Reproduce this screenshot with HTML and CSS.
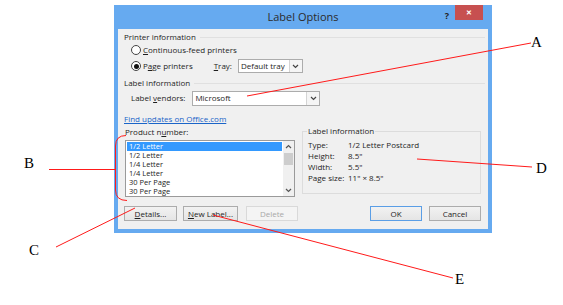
FILE: index.html
```html
<!DOCTYPE html>
<html lang="en">
<head>
  <meta charset="UTF-8">
  <title>Label Options</title>
  <link rel="stylesheet" href="styles.css">
</head>
<body>
  <div class="stage">
    <div class="dialog">
      <div class="titlebar">
        <span></span>
        <span class="title">Label Options</span>
        <div class="controls">
          <span class="help">?</span>
          <span class="close">&#x2715;</span>
        </div>
      </div>

      <div class="content">
        <div class="section-head"><span>Printer information</span></div>
        <div class="row radio-row">
          <span class="radio"></span>
          <span><u>C</u>ontinuous-feed printers</span>
        </div>
        <div class="row radio-row">
          <span class="radio checked"></span>
          <span>P<u>a</u>ge printers</span>
          <span class="tray-label"><u>T</u>ray:</span>
          <div class="select tray">
            <span class="select-text">Default tray</span>
            <span class="select-btn"><svg width="7" height="5" viewBox="0 0 7 5"><path d="M1 1l2.5 2.5L6 1" fill="none" stroke="#444" stroke-width="1.2"/></svg></span>
          </div>
        </div>

        <div class="section-head second"><span>Label information</span></div>
        <div class="row vendor-row">
          <span>Label <u>v</u>endors:</span>
          <div class="select vendor">
            <span class="select-text">Microsoft</span>
            <span class="select-btn"><svg width="7" height="5" viewBox="0 0 7 5"><path d="M1 1l2.5 2.5L6 1" fill="none" stroke="#444" stroke-width="1.2"/></svg></span>
          </div>
        </div>

        <a class="link" href="#">Find updates on Office.com</a>

        <div class="lower">
          <div class="product">
            <div class="product-label">Product n<u>u</u>mber:</div>
            <div class="listbox">
              <ul class="items">
                <li class="selected">1/2 Letter</li>
                <li>1/2 Letter</li>
                <li>1/4 Letter</li>
                <li>1/4 Letter</li>
                <li>30 Per Page</li>
                <li>30 Per Page</li>
              </ul>
              <div class="scrollbar">
                <span class="arrow"><svg width="7" height="5" viewBox="0 0 7 5"><path d="M1 4l2.5-2.5L6 4" fill="none" stroke="#555" stroke-width="1.2"/></svg></span>
                <span class="track"><span class="thumb"></span></span>
                <span class="arrow"><svg width="7" height="5" viewBox="0 0 7 5"><path d="M1 1l2.5 2.5L6 1" fill="none" stroke="#555" stroke-width="1.2"/></svg></span>
              </div>
            </div>
          </div>

          <div class="info-box">
            <span class="legend">Label information</span>
            <dl class="info">
              <dt>Type:</dt><dd>1/2 Letter Postcard</dd>
              <dt>Height:</dt><dd>8.5"</dd>
              <dt>Width:</dt><dd>5.5"</dd>
              <dt>Page size:</dt><dd>11" &times; 8.5"</dd>
            </dl>
          </div>
        </div>

        <div class="buttons">
          <button class="btn details"><u>D</u>etails...</button>
          <button class="btn newlabel"><u>N</u>ew Label...</button>
          <button class="btn delete" disabled>Delete</button>
          <span class="spacer"></span>
          <button class="btn ok">OK</button>
          <button class="btn cancel">Cancel</button>
        </div>
      </div>
    </div>

    <!-- callout lines and letters -->
    <svg class="callouts" width="563" height="305" viewBox="0 0 563 305">
      <g stroke="#ff1a1a" stroke-width="1" fill="none">
        <line x1="531" y1="43" x2="247" y2="96"/>
        <line x1="49" y1="169.5" x2="115" y2="169.5"/>
        <path d="M126 135.5 Q115.5 135.5 115.5 146 L115.5 190 Q115.5 200.5 127 200.5"/>
        <line x1="56" y1="247" x2="135" y2="208"/>
        <line x1="417" y1="159" x2="532" y2="167"/>
        <line x1="213" y1="215" x2="453" y2="278"/>
      </g>
      <g class="tags">
        <text x="531" y="47">A</text>
        <text x="24" y="168">B</text>
        <text x="29" y="255">C</text>
        <text x="536" y="173">D</text>
        <text x="455" y="284">E</text>
      </g>
    </svg>
  </div>
</body>
</html>
```

FILE: styles.css
```css
body {
  margin: 0;
  background: #ffffff;
  font-family: 'Open Sans', 'Noto Sans', sans-serif;
  color: #1e1e1e;
}

.stage {
  position: relative;
  width: 563px;
  height: 305px;
  overflow: hidden;
}

.dialog {
  margin: 5px 0 0 114px;
  width: 378px;
  background: #66aaf0;
  padding: 0 4px 4px;
  box-sizing: border-box;
}

/* Title bar */
.titlebar {
  display: grid;
  grid-template-columns: 1fr auto 1fr;
  align-items: start;
  height: 24px;
}

.title {
  font-size: 11px;
  line-height: 11px;
  padding-top: 6px;
  color: #2b2b2b;
}

.controls {
  display: flex;
  justify-content: flex-end;
  align-items: flex-start;
  gap: 6px;
  margin-right: 5px;
}

.help {
  font-size: 9px;
  font-weight: 700;
  line-height: 9px;
  padding-top: 6px;
  color: #222;
}

.close {
  width: 28px;
  height: 15px;
  background: #c75050;
  color: #ffffff;
  font-size: 7px;
  font-weight: 700;
  display: flex;
  align-items: center;
  justify-content: center;
}

/* Dialog body */
.content {
  background: #f0f0f0;
  padding: 3px 7px 8px 6px;
  font-size: 8px;
  line-height: 10px;
}

.section-head {
  display: flex;
  align-items: center;
  gap: 4px;
  height: 10px;
  margin-right: -4px;
}

.section-head::after {
  content: '';
  flex: 1;
  border-top: 1px solid #e0e0e0;
}

.section-head.second {
  margin-top: 4px;
}

.row {
  display: flex;
  align-items: center;
}

.radio-row {
  height: 16px;
  padding-left: 7px;
}

.radio {
  width: 8px;
  height: 8px;
  border: 1px solid #444;
  border-radius: 50%;
  background: #ffffff;
  margin-right: 2px;
  display: flex;
  align-items: center;
  justify-content: center;
}

.radio.checked::after {
  content: '';
  width: 5px;
  height: 5px;
  border-radius: 50%;
  background: #111;
}

.tray-label {
  margin-left: 21px;
  margin-right: 6px;
}

.select {
  display: flex;
  align-items: stretch;
  background: #ffffff;
  border: 1px solid #acacac;
  box-sizing: border-box;
}

.select-text {
  flex: 1;
  padding-left: 2px;
  display: flex;
  align-items: center;
}

.select-btn {
  width: 12px;
  border-left: 1px solid #d4d4d4;
  background: #f5f5f5;
  display: flex;
  align-items: center;
  justify-content: center;
}

.tray {
  width: 65px;
  height: 14px;
}

.vendor-row {
  height: 16px;
  margin-top: 2px;
  padding-left: 7px;
}

.vendor {
  width: 128px;
  height: 15px;
  margin-left: 7px;
}

.link {
  display: block;
  width: max-content;
  margin-top: 8px;
  color: #1a64c8;
  text-decoration: underline;
}

/* Product list + label info */
.lower {
  display: flex;
  align-items: flex-start;
  margin-top: 3px;
}

.product {
  width: 171px;
}

.product-label {
  height: 10px;
  margin-left: 1px;
}

.listbox {
  display: flex;
  height: 57px;
  margin-top: 3px;
  margin-left: 1px;
  border: 1px solid #9a9a9a;
  background: #ffffff;
  box-sizing: border-box;
}

.items {
  list-style: none;
  margin: 0;
  padding: 1px 1px 0;
  flex: 1;
  font-size: 7.5px;
}

.items li {
  height: 9px;
  line-height: 9px;
  padding-left: 2px;
}

.items li.selected {
  background: #3399ff;
  color: #ffffff;
}

.scrollbar {
  width: 11px;
  display: flex;
  flex-direction: column;
  background: #f0f0f0;
}

.arrow {
  height: 11px;
  display: flex;
  align-items: center;
  justify-content: center;
}

.track {
  flex: 1;
  display: flex;
  flex-direction: column;
}

.thumb {
  height: 12px;
  background: #cdcdcd;
  margin: 1px 1px 0;
}

.info-box {
  flex: 1;
  margin-left: 7px;
  margin-top: 4px;
  height: 63px;
  border: 1px solid #dcdcdc;
  box-sizing: border-box;
  padding: 0 4px;
}

.legend {
  display: block;
  width: max-content;
  margin-top: -6px;
  padding: 0 1px;
  background: #f0f0f0;
  line-height: 10px;
}

.info {
  display: grid;
  grid-template-columns: 40px 1fr;
  row-gap: 1px;
  margin: 4px 0 0 1px;
}

.info dt,
.info dd {
  margin: 0;
  height: 10px;
}

/* Buttons */
.buttons {
  display: flex;
  gap: 7px;
  margin-top: 9px;
}

.btn {
  height: 15px;
  padding: 0;
  font-family: inherit;
  font-size: 8px;
  line-height: 13px;
  color: #1e1e1e;
  background: linear-gradient(#f2f2f2, #e5e5e5);
  border: 1px solid #acacac;
}

.details { width: 53px; }
.newlabel { width: 55px; margin-left: -1px; }
.delete {
  width: 52px;
  margin-left: 1px;
  color: #a8a8a8;
  border-color: #d9d9d9;
  background: #f4f4f4;
}
.spacer { flex: 1; }
.ok {
  width: 52px;
  border-color: #5a9ee6;
}
.cancel { width: 52px; }

/* Callouts */
.callouts {
  position: absolute;
  left: 0;
  top: 0;
  pointer-events: none;
}

.tags text {
  font-family: 'Liberation Serif', serif;
  font-size: 15px;
  fill: #000000;
}
```
